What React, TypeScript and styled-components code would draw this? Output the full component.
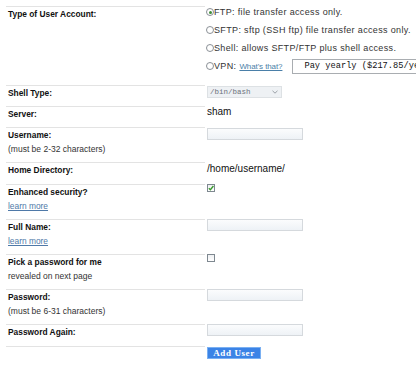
import React from "react";
import styled, { createGlobalStyle, css } from "styled-components";

const Global = createGlobalStyle`
  html, body { margin: 0; padding: 0; background: #fff; overflow: hidden; }
  body { font-family: "Liberation Sans", Arial, sans-serif; color: #111; }
`;

const Form = styled.div`
  padding: 6px 0 0 6px;
  width: 410px;
  overflow: hidden;
`;

const Row = styled.div<{ $h: number }>`
  display: grid;
  grid-template-columns: 199px 1fr;
  height: ${(p) => p.$h}px;
`;

const LabelCell = styled.div`
  border-top: 1px solid #e3e3e3;
  padding: 2px 0 0 2px;
  display: flex;
  flex-direction: column;
  gap: 3px;
`;

const Label = styled.div`
  font-weight: bold;
  font-size: 8.4px;
  line-height: 11px;
  color: #111;
  white-space: nowrap;
`;

const Sub = styled.div`
  font-size: 8.5px;
  line-height: 11px;
  color: #333;
  white-space: nowrap;
`;

const SubLink = styled.a`
  font-size: 8.4px;
  line-height: 11px;
  color: #4f79a8;
  text-decoration: underline;
  white-space: nowrap;
`;

const ValueCell = styled.div<{ $top?: number }>`
  padding: ${(p) => p.$top ?? 0}px 0 0 2px;
  display: flex;
  flex-direction: column;
  align-items: flex-start;
  white-space: nowrap;
  min-width: 0;
`;

const RadioList = styled.div`
  display: flex;
  flex-direction: column;
  gap: 6px;
  margin-left: -1px;
`;

const RadioRow = styled.div`
  display: flex;
  align-items: center;
  height: 12px;
  font-size: 9px;
  letter-spacing: 0.35px;
  color: #333;
  white-space: nowrap;
`;

const Radio = styled.span<{ $checked?: boolean }>`
  flex: none;
  width: 8px;
  height: 8px;
  box-sizing: border-box;
  border-radius: 50%;
  border: 1px solid #8a9096;
  background: #fff;
  position: relative;
  ${(p) =>
    p.$checked &&
    css`
      &::after {
        content: "";
        position: absolute;
        inset: 1.5px;
        border-radius: 50%;
        background: #3f8d3a;
      }
    `}
`;

const InlineLink = styled.a`
  font-size: 8px;
  letter-spacing: -0.1px;
  color: #4a7fa8;
  text-decoration: underline;
  margin-left: 3px;
`;

const PlanBox = styled.div`
  flex: none;
  height: 15px;
  box-sizing: border-box;
  margin-left: 10px;
  padding: 0 0 0 11px;
  border: 1px solid #a9adb1;
  display: flex;
  align-items: center;
  font-family: "Liberation Mono", "Courier New", monospace;
  font-size: 8.7px;
  letter-spacing: 0;
  color: #111;
  background: #fff;
  width: 200px;
`;

const ShellSelect = styled.div`
  width: 75px;
  height: 12px;
  box-sizing: border-box;
  border: 1px solid #dde1e4;
  background: #eef1f4;
  display: flex;
  align-items: center;
  justify-content: space-between;
  padding: 0 3px 0 2px;
  font-family: "Liberation Mono", "Courier New", monospace;
  font-size: 7.5px;
  color: #6d737c;
`;

const PlainValue = styled.div`
  font-size: 10px;
  line-height: 12px;
  color: #111;
`;

const TextInput = styled.input`
  width: 96px;
  height: 12px;
  box-sizing: border-box;
  border: 1px solid #d5d9dd;
  background: linear-gradient(#fbfcfd, #eef2f6);
  padding: 0;
  margin: 0;
  outline: none;
`;

const Check = styled.span`
  display: flex;
  align-items: center;
  justify-content: center;
  width: 8px;
  height: 8px;
  box-sizing: border-box;
  border: 1px solid #7e8890;
  background: linear-gradient(#eef0f2, #fff);
`;

const AddButton = styled.button`
  width: 54px;
  height: 12px;
  padding: 0;
  margin-top: 1px;
  box-sizing: border-box;
  border: 1px solid #7ab0f2;
  background: #3b83e6;
  color: #fff;
  font-family: "Liberation Serif", "Times New Roman", serif;
  font-weight: bold;
  font-size: 9px;
  letter-spacing: 0.6px;
  line-height: 10px;
`;

const Chevron = () => (
  <svg width="6" height="4" viewBox="0 0 6 4">
    <path d="M0.5 0.8 L3 3.2 L5.5 0.8" fill="none" stroke="#9aa0a6" strokeWidth="1" />
  </svg>
);

const CheckMark = () => (
  <svg width="6" height="6" viewBox="0 0 6 6">
    <path d="M0.8 3.2 L2.4 4.8 L5.4 1" fill="none" stroke="#3a9a2e" strokeWidth="1.4" />
  </svg>
);

export default function App() {
  return (
    <>
      <Global />
      <Form>
        <Row $h={79}>
          <LabelCell>
            <Label>Type of User Account:</Label>
          </LabelCell>
          <ValueCell>
            <RadioList>
              <RadioRow>
                <Radio $checked />
                FTP: file transfer access only.
              </RadioRow>
              <RadioRow>
                <Radio />
                SFTP: sftp (SSH ftp) file transfer access only.
              </RadioRow>
              <RadioRow>
                <Radio />
                Shell: allows SFTP/FTP plus shell access.
              </RadioRow>
              <RadioRow>
                <Radio />
                VPN:
                <InlineLink href="#">What's that?</InlineLink>
                <PlanBox>Pay yearly ($217.85/year)</PlanBox>
              </RadioRow>
            </RadioList>
          </ValueCell>
        </Row>

        <Row $h={21}>
          <LabelCell>
            <Label>Shell Type:</Label>
          </LabelCell>
          <ValueCell $top={1}>
            <ShellSelect>
              /bin/bash
              <Chevron />
            </ShellSelect>
          </ValueCell>
        </Row>

        <Row $h={21}>
          <LabelCell>
            <Label>Server:</Label>
          </LabelCell>
          <ValueCell>
            <PlainValue>sham</PlainValue>
          </ValueCell>
        </Row>

        <Row $h={35}>
          <LabelCell>
            <Label>Username:</Label>
            <Sub>(must be 2-32 characters)</Sub>
          </LabelCell>
          <ValueCell $top={1}>
            <TextInput />
          </ValueCell>
        </Row>

        <Row $h={22}>
          <LabelCell>
            <Label>Home Directory:</Label>
          </LabelCell>
          <ValueCell $top={1}>
            <PlainValue>/home/username/</PlainValue>
          </ValueCell>
        </Row>

        <Row $h={35}>
          <LabelCell>
            <Label>Enhanced security?</Label>
            <SubLink href="#">learn more</SubLink>
          </LabelCell>
          <ValueCell>
            <Check>
              <CheckMark />
            </Check>
          </ValueCell>
        </Row>

        <Row $h={35}>
          <LabelCell>
            <Label>Full Name:</Label>
            <SubLink href="#">learn more</SubLink>
          </LabelCell>
          <ValueCell>
            <TextInput />
          </ValueCell>
        </Row>

        <Row $h={35}>
          <LabelCell>
            <Label>Pick a password for me</Label>
            <Sub>revealed on next page</Sub>
          </LabelCell>
          <ValueCell>
            <Check />
          </ValueCell>
        </Row>

        <Row $h={35}>
          <LabelCell>
            <Label>Password:</Label>
            <Sub>(must be 6-31 characters)</Sub>
          </LabelCell>
          <ValueCell>
            <TextInput type="password" />
          </ValueCell>
        </Row>

        <Row $h={22}>
          <LabelCell>
            <Label>Password Again:</Label>
          </LabelCell>
          <ValueCell>
            <TextInput type="password" />
          </ValueCell>
        </Row>

        <Row $h={19}>
          <LabelCell />
          <ValueCell>
            <AddButton>Add User</AddButton>
          </ValueCell>
        </Row>
      </Form>
    </>
  );
}
